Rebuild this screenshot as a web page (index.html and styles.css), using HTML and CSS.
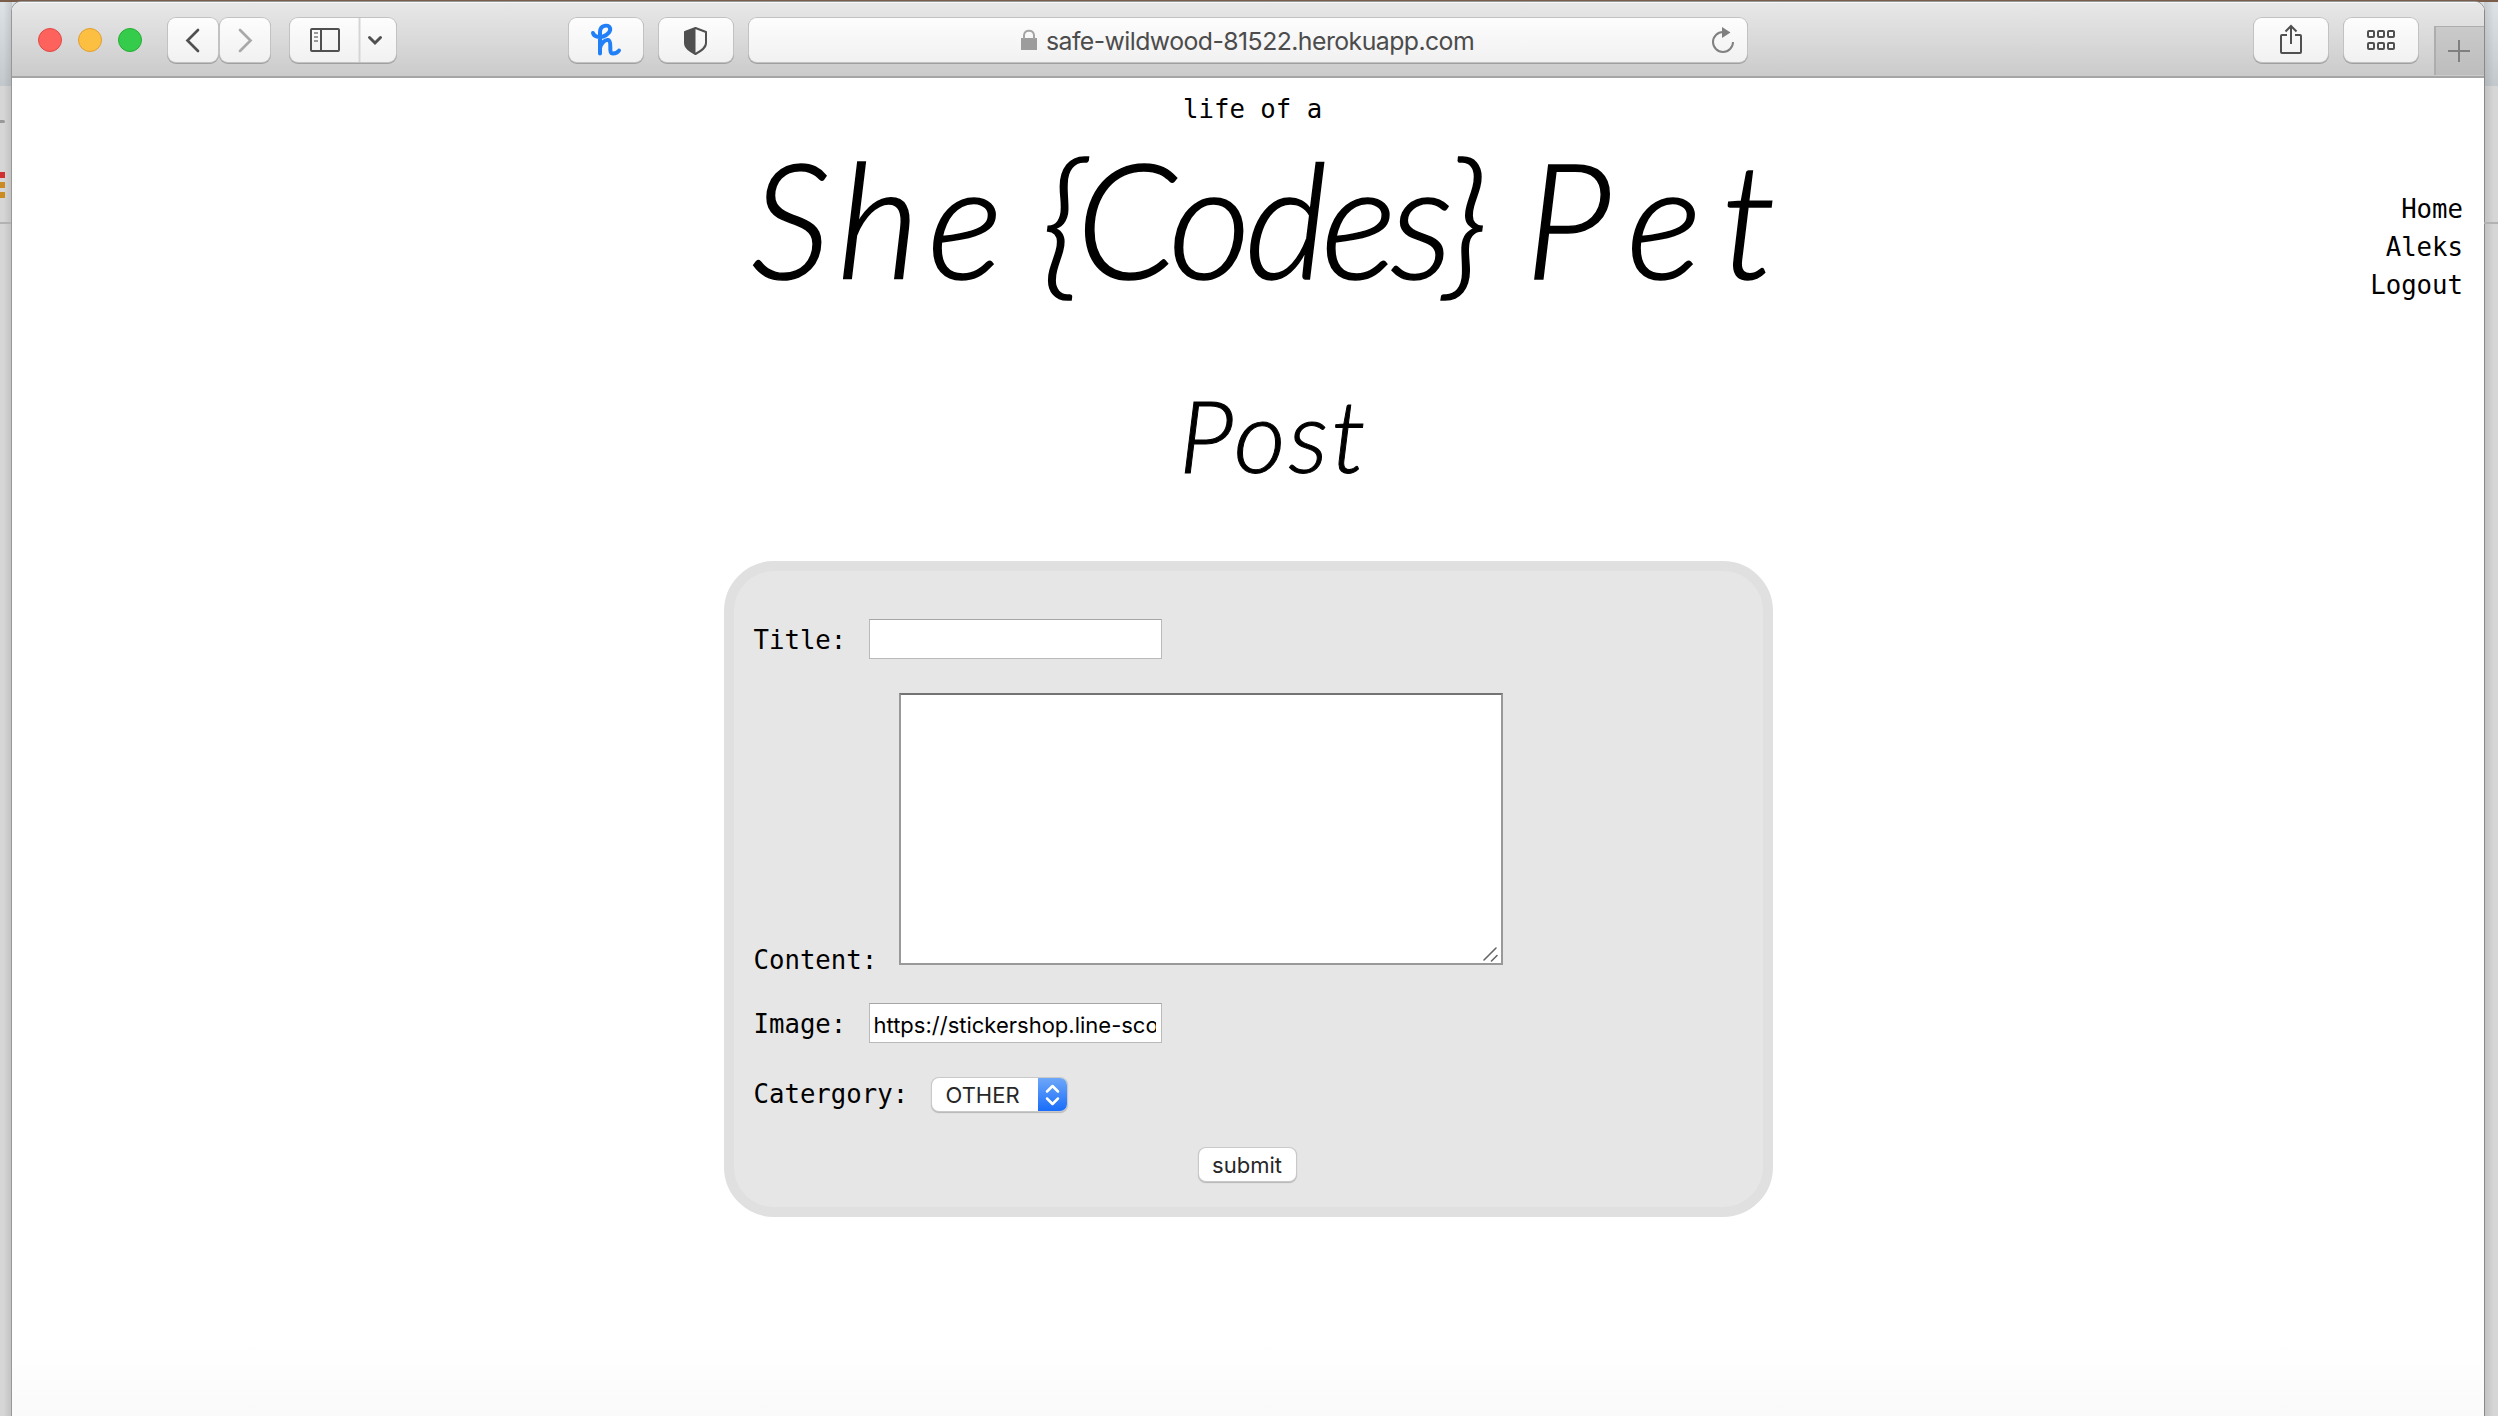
FILE: index.html
```html
<!DOCTYPE html>
<html lang="en">
<head>
<meta charset="utf-8">
<title>She Codes Pet</title>
<link rel="stylesheet" href="styles.css">
</head>
<body>
<div class="desktop">
  <aside class="behind behind-left">
    <div class="behind-bar"></div>
    <div class="behind-body"><i class="dash"></i><i class="mark red"></i><i class="mark"></i><i class="mark"></i><i class="rule"></i></div>
  </aside>
  <div class="window">
    <header class="toolbar">
      <div class="lights"><i class="light close"></i><i class="light min"></i><i class="light max"></i></div>
      <div class="btn back"><svg width="50" height="44" viewBox="0 0 50 44"><path d="M30 12L19.500 22.500L30 33" fill="none" stroke="#505050" stroke-width="2.700" stroke-linecap="round"/></svg></div>
      <div class="btn forward"><svg width="50" height="44" viewBox="0 0 50 44"><path d="M20 12L30.500 22.500L20 33" fill="none" stroke="#a9a9a9" stroke-width="2.700" stroke-linecap="round"/></svg></div>
      <div class="btn side"><svg width="106" height="44" viewBox="0 0 106 44"><path d="M69.500 0V44" stroke="#d5d5d5" stroke-width="2"/><rect x="21" y="11" width="28" height="22" rx="1" fill="none" stroke="#505050" stroke-width="2"/><path d="M31 11V33" stroke="#505050" stroke-width="2"/><path d="M24 15h4M24 19h4M24 23h4" stroke="#999" stroke-width="2"/><path d="M79.500 19.500L85 25L90.500 19.500" fill="none" stroke="#505050" stroke-width="3" stroke-linecap="round"/></svg></div>
      <div class="btn honey"><svg width="74" height="44" viewBox="0 0 74 44"><path d="M24 15C25 19 30 19.500 34 18.500C39 17 42 13 41 10C39.500 6 31 7 31 14V35.500M31 30C32 25 36 21.500 39 22C44 23 38.500 35.500 44 35.500C47 35.500 49 34 50 32.500" fill="none" stroke="#2180f7" stroke-width="4" stroke-linecap="round" stroke-linejoin="round"/></svg></div>
      <div class="btn shield"><svg width="74" height="44" viewBox="0 0 74 44"><path d="M36.500 10L47 14V25C47 30 42 33 36.500 36C31 33 26 30 26 25V14Z" fill="none" stroke="#505050" stroke-width="2" stroke-linejoin="round"/><path d="M36.500 10V36C31 33 26 30 26 25V14Z" fill="#505050"/></svg></div>
      <div class="btn address">
        <svg class="lock" width="16" height="22" viewBox="0 0 16 22"><path d="M0 9H16V21H0Z" fill="#9c9c9c"/><path d="M3 10V6.500C3 0 13 0 13 6.500V10" fill="none" stroke="#a5a5a5" stroke-width="2"/></svg>
        <span class="url">safe-wildwood-81522.herokuapp.com</span>
        <svg class="reload" width="26" height="30" viewBox="0 0 26 30"><path d="M13 6A10 10 0 1 0 23 16" fill="none" stroke="#808080" stroke-width="2"/><path d="M12 1L20.500 6.500L12 12Z" fill="#808080"/></svg>
      </div>
      <div class="btn share"><svg width="74" height="44" viewBox="0 0 74 44"><path d="M33 17H28Q27 17 27 18V34Q27 35 28 35H46Q47 35 47 34V18Q47 17 46 17H41M37 26V8M31.500 13.500L37 8L42.500 13.500" fill="none" stroke="#505050" stroke-width="2"/></svg></div>
      <div class="btn grid"><svg width="74" height="44" viewBox="0 0 74 44"><g fill="none" stroke="#505050" stroke-width="2"><rect x="24" y="13" width="6" height="6" rx="1"/><rect x="34" y="13" width="6" height="6" rx="1"/><rect x="44" y="13" width="6" height="6" rx="1"/><rect x="24" y="25" width="6" height="6" rx="1"/><rect x="34" y="25" width="6" height="6" rx="1"/><rect x="44" y="25" width="6" height="6" rx="1"/></g></svg></div>
      <div class="newtab"><svg width="48" height="48" viewBox="0 0 48 48"><path d="M12 24H34M23 13V35" stroke="#808080" stroke-width="2"/></svg></div>
    </header>
    <main class="page">
      <nav class="menu"><a>Home</a><a>Aleks</a><a>Logout</a></nav>
      <p class="tagline">life of a</p>
      <h1 class="brand"><span class="w-she">She</span><span class="w-codes">{Codes}</span><span class="w-pet">Pet</span></h1>
      <h2 class="heading">Post</h2>
      <form class="card">
        <div class="row"><label class="label">Title:</label><div class="input"></div></div>
        <div class="row row-content"><label class="label">Content:</label><div class="textarea"><svg width="16" height="16" viewBox="0 0 16 16"><path d="M2 14L14 2M9.500 15L15 9.500" stroke="#666" stroke-width="1.600" stroke-linecap="round"/></svg></div></div>
        <div class="row row-image"><label class="label">Image:</label><div class="input"><span>https://stickershop.line-sco</span></div></div>
        <div class="row row-category"><label class="label">Catergory:</label><div class="select"><span>OTHER</span><svg width="29" height="34" viewBox="0 0 29 34"><path d="M9 13.500L14.500 8L20 13.500M9 20.500L14.500 26L20 20.500" fill="none" stroke="#fff" stroke-width="2.500" stroke-linecap="round" stroke-linejoin="round"/></svg></div></div>
        <div class="submit">submit</div>
      </form>
    </main>
  </div>
  <aside class="behind behind-right">
    <div class="behind-bar"></div>
    <div class="behind-body"><i class="rule"></i></div>
  </aside>
</div>
</body>
</html>
```
FILE: styles.css
```css
* { box-sizing: border-box; }
body { margin: 0; background: #d3d3d3; overflow: hidden; }
svg { display: block; flex: none; }
.desktop {
  display: grid;
  grid-template-columns: 12px 2472px 14px;
  height: 1416px;
  border-top: 2px solid #7a5d4a;
  background: linear-gradient(#dde2e6, #c3c8cc) top / 100% 84px no-repeat #d6d6d6;
}
.behind-bar { height: 84px; }
.behind-left { background: linear-gradient(90deg, transparent 30%, rgba(0,0,0,.1)); }
.behind-right { background: linear-gradient(270deg, transparent 30%, rgba(0,0,0,.1)); }
.behind-body { display: flex; flex-direction: column; height: 1330px; }
.behind-body i { display: block; }
.dash { width: 5px; height: 3px; margin: 34px 0 49px; background: #999; border-radius: 0 2px 2px 0; }
.mark { width: 5px; height: 6px; margin-bottom: 4px; background: #c98b22; }
.mark.red { background: #d13030; }
.rule { height: 2px; background: #b2b2b2; }
.behind-left .rule { margin-top: 20px; }
.behind-right .rule { margin-top: 136px; }
.window {
  height: 1414px;
  border-radius: 9px 9px 0 0;
  box-shadow: 0 0 0 1px #989898;
  background: linear-gradient(#fff 1340px, #fafafa);
  overflow: hidden;
}
.toolbar {
  display: flex;
  height: 76px;
  padding: 16px 0 0 26px;
  background: linear-gradient(#e8e8e8, #cbcbcb);
  border-bottom: 2px solid #a5a5a5;
  box-shadow: inset 0 1px #f7f7f7;
}
.lights { display: flex; gap: 16px; margin: 10px 26px 0 0; }
.light { width: 24px; height: 24px; border-radius: 50%; border: 1px solid; }
.close { background: #fd625d; border-color: #e04a46; }
.min { background: #fdbf42; border-color: #df9f34; }
.max { background: #35cb4b; border-color: #27ad36; }
.btn {
  display: flex;
  flex: none;
  height: 44px;
  border-radius: 8px;
  background: linear-gradient(#fdfdfd, #f1f1f1);
  box-shadow: 0 0 0 1px #c2c2c2, 0 1px 0 1px #a0a0a0;
}
.back, .forward { width: 50px; margin-right: 2px; }
.side { width: 106px; margin: 0 173px 0 18px; }
.honey, .shield, .share, .grid { width: 74px; }
.honey, .shield { margin-right: 16px; }
.address { width: 998px; }
.lock { margin: 11px 0 0 272px; }
.url {
  width: 436px;
  margin: 1px 0 0 9px;
  font: 24.8px/44px Inter, sans-serif;
  letter-spacing: -0.55px;
  color: #4c4c4c;
  white-space: nowrap;
}
.reload { margin: 8px 0 0 228px; }
.share { margin: 0 16px 0 507px; }
.newtab {
  width: 50px;
  height: 49px;
  margin: 8px 0 0 16px;
  background: linear-gradient(#cacaca, #bdbdbd);
  border-left: 2px solid #adadad;
  border-top: 1px solid #adadad;
}
.page {
  position: relative;
  font: 25.7px/38px "DejaVu Sans Mono", monospace;
  color: #000;
}
.menu {
  position: absolute;
  top: 112px;
  right: 21px;
  display: flex;
  flex-direction: column;
  align-items: flex-end;
}
.tagline { margin: 0 0 0 1171px; padding-top: 12px; }
.brand {
  display: flex;
  height: 176px;
  margin: 0 0 0 739px;
  font: italic 300 160px/178px Lato, sans-serif;
  white-space: nowrap;
  -webkit-text-stroke: 1.5px #000;
}
.w-she { width: 290px; letter-spacing: 8px; }
.w-codes { width: 484px; letter-spacing: -6px; }
.w-pet { letter-spacing: 20px; }
.heading {
  height: 110px;
  margin: 76px 0 0 1167px;
  font: italic 300 101px/108px Lato, sans-serif;
  letter-spacing: 3px;
  -webkit-text-stroke: 1px #000;
}
.card {
  width: 1049px;
  height: 656px;
  margin: 71px 0 0 711.5px;
  padding: 48px 20px 0;
  border: 10px solid #e0e0e0;
  border-radius: 50px;
  background: #e6e6e6;
}
.row { display: flex; height: 40px; }
.label { width: 93px; margin-top: 1px; line-height: 40px; white-space: pre; }
.input {
  width: 293px;
  height: 40px;
  margin-left: 22px;
  padding: 0 5px 0 4px;
  background: #fff;
  border: 1px solid #bababa;
  border-top-color: #a5a5a5;
  font: 22px/42px Inter, sans-serif;
}
.input span { display: block; overflow: hidden; white-space: nowrap; }
.row-content { height: 272px; margin-top: 34px; align-items: flex-end; }
.row-content .label { width: 123px; margin-bottom: -15px; }
.textarea {
  display: flex;
  justify-content: flex-end;
  align-items: flex-end;
  width: 604px;
  height: 272px;
  margin-left: 22px;
  padding: 0 3px 1px 0;
  background: #fff;
  border: 2px solid #999;
  border-top-color: #747474;
}
.row-image { margin-top: 38px; }
.row-category { height: 34px; margin-top: 35px; }
.row-category .label { width: 154px; margin-top: -4px; }
.select {
  display: flex;
  width: 135px;
  height: 33px;
  margin-left: 24px;
  border-radius: 7px;
  background: #fff;
  box-shadow: 0 0 0 1px #c9c9c9, 0 1px 1px 1px #b5b5b5;
  font: 22px/34px Inter, sans-serif;
  color: #272727;
  overflow: hidden;
}
.select span { width: 106px; padding-left: 14px; }
.select svg { background: linear-gradient(#6ea7f8, #166bfb); }
.submit {
  width: 97px;
  height: 33px;
  margin: 36px 0 0 445px;
  border-radius: 7px;
  background: #fff;
  box-shadow: 0 0 0 1px #c9c9c9, 0 1px 1px 1px #b5b5b5;
  font: 22px/35px Inter, sans-serif;
  color: #272727;
  text-align: center;
}
```
